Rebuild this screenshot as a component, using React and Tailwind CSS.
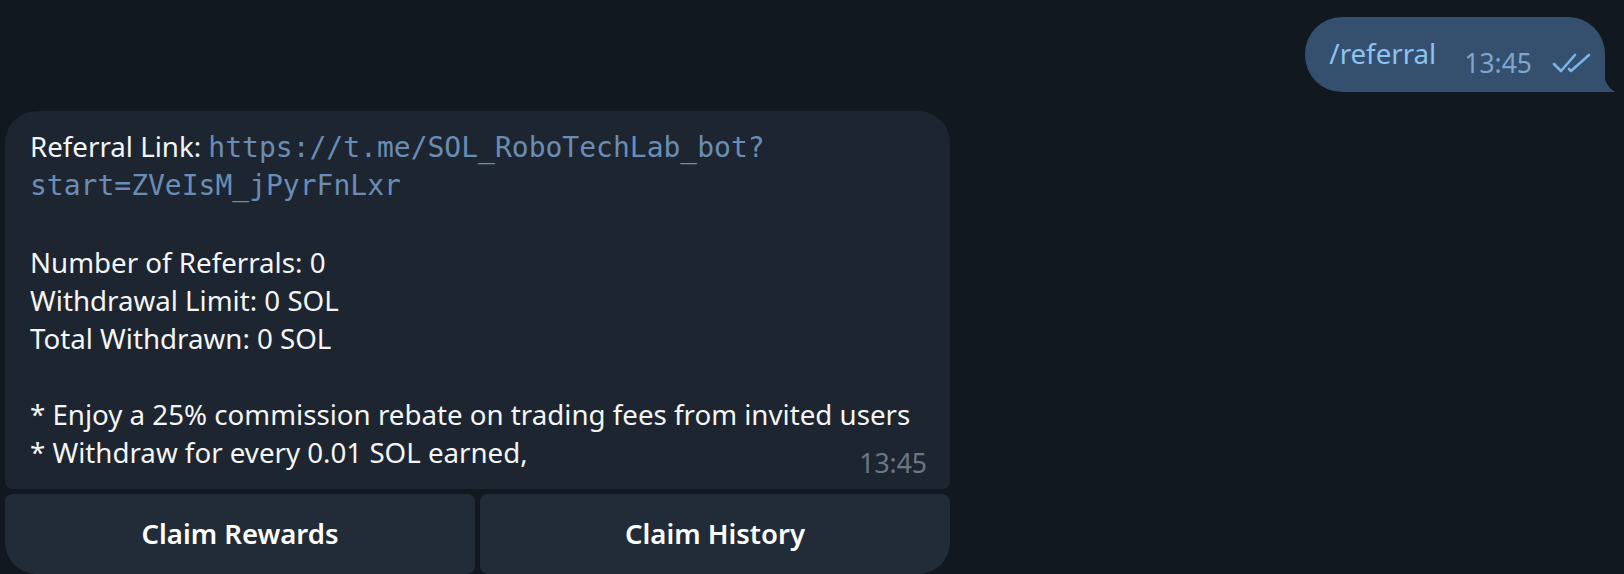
export default function App() {
  const sans = { fontFamily: '"Noto Sans", "Open Sans", sans-serif' };
  const mono = { fontFamily: '"DejaVu Sans Mono", monospace' };

  return (
    <div
      className="h-[574px] w-full overflow-hidden bg-[#121820] pt-[17px]"
      style={sans}
    >
      {/* outgoing command */}
      <div className="flex justify-end pr-[19px]">
        <div className="relative flex h-[75px] rounded-[37px] rounded-br-none bg-[#35506f] pl-[24px] pr-[13px]">
          <div className="pt-[17px] text-[27.7px] leading-[38px] text-[#8cc3f2]">
            /referral
          </div>
          <div className="ml-[28px] pt-[29px] text-[26.5px] leading-[35px] text-[#7fa6cc]">
            13:45
          </div>
          <svg
            className="ml-[20px] mt-[36px]"
            width="40"
            height="20"
            viewBox="0 0 40 20"
            fill="none"
            stroke="#7ab3e6"
            strokeWidth="2.6"
            strokeLinecap="round"
            strokeLinejoin="round"
          >
            <path d="M2 11 L9 18 L23 2" />
            <path d="M17 16 L19 18 L37 2" />
          </svg>
          <svg
            className="absolute bottom-0 right-[-10px]"
            width="12"
            height="26"
            viewBox="0 0 12 26"
          >
            <path d="M0 0 C0 13 4 21 12 26 L0 26 Z" fill="#35506f" />
          </svg>
        </div>
      </div>

      {/* bot reply */}
      <div className="ml-[5px] mt-[19px] w-[945px]">
        <div className="relative rounded-[32px] rounded-b-[8px] bg-[#1d2530] pb-[18px] pl-[25px] pr-[40px] pt-[16px] text-[27.7px] leading-[38px] text-[#f4f5f6]">
          <div className="whitespace-nowrap">
            Referral Link:{" "}
            <span className="text-[28px] text-[#6a8db5]" style={mono}>
              https://t.me/SOL_RoboTechLab_bot?
            </span>
          </div>
          <div className="whitespace-nowrap text-[28px] text-[#6a8db5]" style={mono}>
            start=ZVeIsM_jPyrFnLxr
          </div>
          <div className="h-[38px]" />
          <div>Number of Referrals: 0</div>
          <div>Withdrawal Limit: 0 SOL</div>
          <div>Total Withdrawn: 0 SOL</div>
          <div className="h-[38px]" />
          <div className="whitespace-nowrap">
            * Enjoy a 25% commission rebate on trading fees from invited users
          </div>
          <div>* Withdraw for every 0.01 SOL earned,</div>
          <div className="absolute bottom-[8px] right-[23px] text-[26.5px] leading-[35px] text-[#6c7783]">
            13:45
          </div>
        </div>

        <div className="mt-[5px] flex gap-[5px]">
          <button className="flex h-[80px] flex-1 items-center justify-center rounded-[8px] rounded-bl-[32px] bg-[#222c38] text-[27.5px] font-semibold text-white">
            Claim Rewards
          </button>
          <button className="flex h-[80px] flex-1 items-center justify-center rounded-[8px] rounded-br-[32px] bg-[#222c38] text-[27.5px] font-semibold text-white">
            Claim History
          </button>
        </div>
      </div>
    </div>
  );
}
